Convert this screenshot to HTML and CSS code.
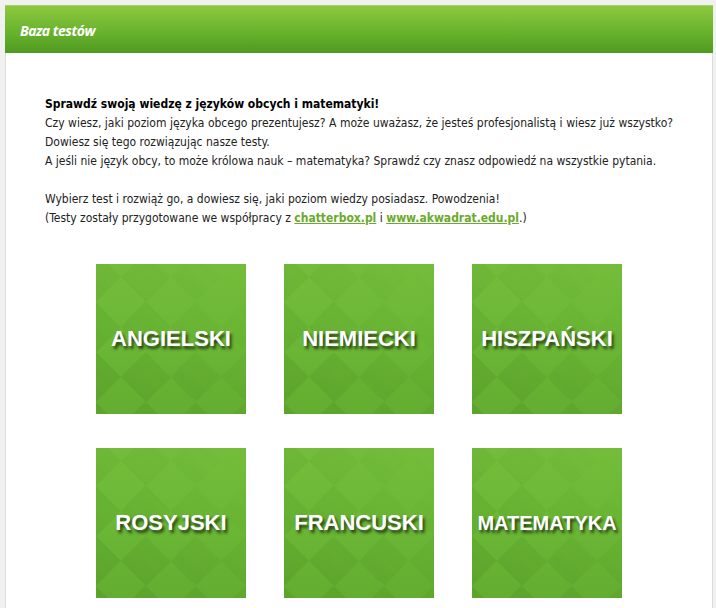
FILE: index.html
```html
<!DOCTYPE html>
<html lang="pl">
<head>
  <meta charset="UTF-8" />
  <title>Baza testów</title>
  <link rel="stylesheet" href="styles.css">
</head>
<body>

  <div class="panel">
    <header class="panel-head">
      <h1>Baza testów</h1>
    </header>

    <main class="panel-body">
      <p class="intro">
        <strong>Sprawdź swoją wiedzę z języków obcych i matematyki!</strong><br>
        Czy wiesz, jaki poziom języka obcego prezentujesz? A może uważasz, że jesteś profesjonalistą i wiesz już wszystko? Dowiesz się tego rozwiązując nasze testy.<br>
        A jeśli nie język obcy, to może królowa nauk – matematyka? Sprawdź czy znasz odpowiedź na wszystkie pytania.
      </p>
      <p class="intro">
        Wybierz test i rozwiąż go, a dowiesz się, jaki poziom wiedzy posiadasz. Powodzenia!<br>
        (Testy zostały przygotowane we współpracy z <a href="#">chatterbox.pl</a> i <a href="#">www.akwadrat.edu.pl</a>.)
      </p>

      <div class="tests">
        <a class="tile" href="#"><span>ANGIELSKI</span></a>
        <a class="tile" href="#"><span>NIEMIECKI</span></a>
        <a class="tile" href="#"><span>HISZPAŃSKI</span></a>
        <a class="tile" href="#"><span>ROSYJSKI</span></a>
        <a class="tile" href="#"><span>FRANCUSKI</span></a>
        <a class="tile tile-long" href="#"><span>MATEMATYKA</span></a>
      </div>
    </main>
  </div>

</body>
</html>
```

FILE: styles.css
```css
body {
  margin: 0;
  padding: 5px 3px 0 5px;
  background: #f1f1f1;
  font-family: "DejaVu Sans Condensed", "DejaVu Sans", sans-serif;
  font-size: 12px;
  color: #222;
}
.panel {
  background: #fff;
  border: 1px solid #dcdcdc;
  border-top: 0;
  min-height: 700px;
}
.panel-head {
  height: 48px;
  margin: 0 -1px;
  display: flex;
  align-items: center;
  padding-left: 15px;
  background: linear-gradient(#8dc83f, #69b32d 55%, #4e9a20);
  border-top: 1px solid #a4d45e;
  box-sizing: border-box;
}
.panel-head h1 {
  margin: 0 0 0 0;
  padding-top: 1px;
  font-family: "Open Sans", sans-serif;
  font-style: italic;
  font-weight: bold;
  font-size: 14px;
  color: #fff;
  letter-spacing: -0.5px;
}
.panel-body {
  padding: 42px 39px 0;
}
.intro {
  margin: 0 0 19px;
  line-height: 19px;
  text-align: justify;
}
.intro strong {
  color: #000;
}
.intro a {
  color: #6aaa2c;
  font-weight: bold;
}
.tests {
  display: grid;
  grid-template-columns: repeat(3, 150px);
  column-gap: 38px;
  row-gap: 34px;
  justify-content: center;
  margin-top: 36px;
}
.tile {
  position: relative;
  height: 150px;
  overflow: hidden;
  display: flex;
  align-items: center;
  justify-content: center;
  text-decoration: none;
  background: linear-gradient(#74bd3b, #6cb836 45%, #63ad30);
}
.tile::before {
  content: "";
  position: absolute;
  left: -50%;
  top: -50%;
  width: 200%;
  height: 200%;
  background: repeating-conic-gradient(rgba(40, 100, 10, 0.12) 0 25%, transparent 0 50%) 0 0 / 70.7px 70.7px;
  transform: rotate(45deg);
  -webkit-mask-image: linear-gradient(transparent 20%, #000 80%);
  mask-image: linear-gradient(transparent 20%, #000 80%);
}
.tile span {
  position: relative;
  font-family: "Liberation Sans", Arial, sans-serif;
  font-weight: bold;
  font-size: 22px;
  color: #fff;
  text-shadow: 2px 3px 3px rgba(0, 0, 0, 0.65);
}
.tile-long span {
  font-size: 20px;
}
```
